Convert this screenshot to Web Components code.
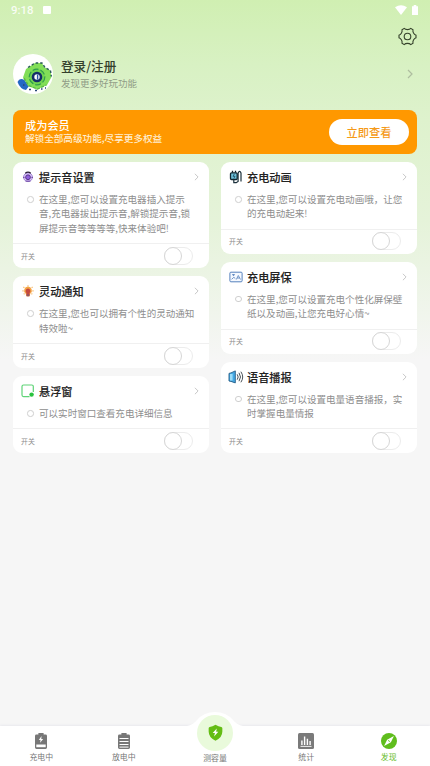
<!DOCTYPE html>
<html lang="zh-CN">
<head>
<meta charset="utf-8">
<title>发现</title>
<style>
html,body{margin:0;height:100%}
body{font-family:"Noto Sans CJK SC","Noto Sans",sans-serif;color:#333;overflow:hidden}
</style>
</head>
<body>
<discover-page></discover-page>
<script>
const ICONS = {
  sound: `<svg viewBox="0 0 14 14"><circle cx="7" cy="7.200" r="5.200" fill="#d9c4f8" stroke="#9a7bd0" stroke-width="1"/><path d="M3.800 2.600Q7 0 10.200 2.600" fill="none" stroke="#292034" stroke-width="1.500"/><circle cx="7" cy="7.300" r="2.800" fill="#9061dd" stroke="#4d287e" stroke-width="1"/><path d="M1.200 7.500h1.800M11 7.500h1.800M4.200 11.800h5.600" stroke="#5d3894"/></svg>`,
  bulb: `<svg viewBox="0 0 14 14"><path d="M7 1.800V.4M2.800 3.300l-1.200-1M11.200 3.300l1.200-1M2 6.800H.4M12 6.800h1.600M3 10l-1 .8M11 10l1 .8" stroke="#f6bd72" stroke-width="1.400"/><path d="M7 1.800a4.600 4.600 0 0 0-2.800 8.200L5.200 13h3.600l1-3A4.600 4.600 0 0 0 7 1.800z" fill="#f5a545"/><path d="M7 4a2.900 2.900 0 0 0-2 4.900L5.500 13h3L9 8.900A2.900 2.900 0 0 0 7 4z" fill="#c4483e"/><path d="M5.400 10.800h3.200V13H5.400z" fill="#8f5664"/></svg>`,
  float: `<svg viewBox="0 0 14 14"><path d="M8.500 12.600H2.500A1.500 1.500 0 0 1 1 11.100V2.500A1.500 1.500 0 0 1 2.500 1h8.300a1.500 1.500 0 0 1 1.500 1.500V8" fill="none" stroke="#5fd477" stroke-width="1.200"/><circle cx="10.600" cy="10.600" r="2.200" fill="#29c33e"/></svg>`,
  plug: `<svg viewBox="0 0 14 14"><path d="M3.500.7v2M6.500.7v2" stroke="#101c24" stroke-width="1.300"/><rect x="1.500" y="2.800" width="6.700" height="6.700" rx="1" fill="#6ec0da" stroke="#13252e" stroke-width="1.300"/><path d="M5.300 4L4 6.300h2L4.800 8.500" fill="none" stroke="#16465a" stroke-width=".8"/><path d="M4.800 9.700v3h2.400l1.900-1.300V3.200Q10.600-.3 12 3v8.600" fill="none" stroke="#1b303b" stroke-width="1.200"/></svg>`,
  screen: `<svg viewBox="0 0 14 14"><rect x=".9" y="2.200" width="12.200" height="9.600" rx="1" fill="#f5f9ff" stroke="#5580bd" stroke-width="1"/><path d="M2.600 9.300l2.200-2 1.500 1.200M7.300 9.500l2-4 2.200 4M8.200 8h2.300M3 4.700h3M4.500 4v2" fill="none" stroke="#628ac2" stroke-width=".9"/></svg>`,
  voice: `<svg viewBox="0 0 16 14"><path d="M1 3.400L3 2.900 7.300.9v12L3 11.400 1 11z" fill="#45a9e4" stroke="#235b86" stroke-width=".9"/><path d="M2 4h2.600v6.500H2z" fill="#9bdcf8"/><path d="M9.200 4.300q2 2.700 0 5.400M11 2.800q3 4.200 0 8.400M12.900 1.700q3.600 5.300 0 10.600" fill="none" stroke="#333d45" stroke-width=".9"/></svg>`,
  charge: `<svg viewBox="0 0 16 16"><path d="M5.400 0h5.200v1.500h2A1.400 1.400 0 0 1 14 2.900v11.700A1.400 1.400 0 0 1 12.600 16H3.400A1.400 1.400 0 0 1 2 14.600V2.900A1.400 1.400 0 0 1 3.400 1.500h2z" fill="#777"/><path d="M8.500 3.100L5.800 7h1.700l-.4 2.800L10.200 6H8.300z" fill="#fff"/><path d="M3.300 11.500h9.400v2.700H3.300z" fill="#fff"/></svg>`,
  discharge: `<svg viewBox="0 0 16 16"><path d="M5.400 0h5.200v1.500h2A1.400 1.400 0 0 1 14 2.900v11.700A1.400 1.400 0 0 1 12.600 16H3.400A1.400 1.400 0 0 1 2 14.600V2.900A1.400 1.400 0 0 1 3.400 1.500h2z" fill="#777"/><path d="M3.500 5.500h9M3.500 8.500h9M3.500 11.500h9M3.500 14.100h9" stroke="#fff" stroke-width="1"/></svg>`,
  stats: `<svg viewBox="0 0 16 16"><rect width="16" height="16" rx="1.500" fill="#7a7a7a"/><path d="M3.900 7.500V12M6.600 3.500V12M9.400 5.800V12M12.100 8V12" stroke="#fff" stroke-width="1.400"/><path d="M2.500 13.400h11" stroke="#fff" stroke-width=".9"/></svg>`,
  compass: `<svg viewBox="0 0 16 16"><circle cx="8" cy="8" r="8" fill="#5fbd1d"/><path d="M12.900 3.100L9.900 9.200 3.100 12.900 6.100 6.800z" fill="#fff"/><path d="M7 7.400L9 8.600" stroke="#5fbd1d" stroke-width=".9"/></svg>`,
  shield: `<svg viewBox="0 0 16 18"><path d="M8 .6Q11.300 2.600 14.200 3Q15.300 3.200 15.300 4.500V8Q15.300 14.500 8 17.700.7 14.500.7 8V4.500Q.7 3.200 1.800 3 4.700 2.600 8 .6z" fill="#64bd14"/><path d="M9.300 4.800L5 9.400h2.400l-.9 3.800 4.500-4.900H8.700z" fill="#fff"/></svg>`,
  chevron: `<svg viewBox="0 0 6 10"><path d="M1 1l4 4-4 4" fill="none" stroke="currentColor" stroke-width="1.200"/></svg>`
};
function define(name, css, html) {
  customElements.define(name, class extends HTMLElement {
    constructor() {
      super();
      this.attachShadow({mode: 'open'}).innerHTML = `<style>*{box-sizing:border-box}${css}</style>${html}`;
    }
  });
}
customElements.define('ui-icon', class extends HTMLElement {
  constructor() { super(); this.attachShadow({mode: 'open'}); }
  connectedCallback() {
    this.shadowRoot.innerHTML = `<style>:host{display:block;flex:none}svg{display:block;width:100%;height:100%}</style>${ICONS[this.getAttribute('name')]}`;
  }
});
define('toggle-switch', `
:host{display:block;width:29px;height:18px;flex:none}
div{width:29px;height:18px;border:1px solid #ececec;border-radius:9px;background:#fff}
i{display:block;width:18px;height:18px;margin:-1px;border:1px solid #d6d6d6;border-radius:50%;background:#fff}`,
`<div><i></i></div>`);

define('status-bar', `
:host{display:flex;align-items:center;height:18px;padding:1px 11px 0;color:rgba(255,255,255,.88);font:500 11.400px/18px Roboto,sans-serif}
.sq{width:8px;height:8px;border-radius:1px;background:#fff;margin-left:10px;margin-right:auto}
svg{display:block}.b{margin-left:5px;margin-right:1px}`,
`<span>9:18</span><span class="sq"></span>
<svg width="12" height="10" viewBox="0 0 12 10"><path d="M0 2.200Q6-1.800 12 2.200L6 10z" fill="#fff"/></svg>
<svg class="b" width="6" height="10" viewBox="0 0 6 10"><path d="M1.700 0h2.600v1.300H6V10H0V1.300h1.700z" fill="#fff"/></svg>`);

define('user-row', `
:host{display:flex;align-items:center;height:40px;padding:0 17px 0 13px}
.av{display:block;width:40px;height:40px;flex:none}
.t{margin-left:8px;flex:1}
.n{font-size:12.600px;line-height:18px;font-weight:500;color:#34402c}
.s{font-size:9.500px;line-height:15px;color:#909c86;margin-top:1px}
ui-icon{width:6px;height:10px;color:#aebda0}`,
`<svg class="av" viewBox="0 0 40 40"><circle cx="20" cy="20" r="20" fill="#fff"/>
<path d="M4.500 28q2-5 7-2l4.500 6-3 4q-6-1-8.500-8z" fill="#2468c4"/>
<path d="M13 15L22 9h7l2 4 6.500 3.500 1 6.500-4.500 8-10 4.500-9-3.500-5-8.500z" fill="#82de58"/>
<path d="M15 13.500L22 9h7l3 4.500 5.500 3 .8 6" fill="none" stroke="#2a5a58" stroke-width="1.400" stroke-dasharray="2.500 2"/>
<path d="M11 24l4.500 7.500 9 3.500 9-4" fill="none" stroke="#57b648" stroke-width="1.200" stroke-dasharray="3 1.500"/>
<circle cx="24" cy="23" r="7.800" fill="#6fd350" stroke="#2f9c4c" stroke-width="1.200" stroke-dasharray="6 2"/>
<circle cx="24" cy="23" r="4" fill="#fff" stroke="#152e67" stroke-width="2.600"/>
<path d="M24.600 20.500v5" fill="none" stroke="#2956a7" stroke-width="1.400"/>
<path d="M10 31h1.500M16 35.500h2M22 36.500h2M28 35h1.500M32 34h1" stroke="#294878" stroke-width="1.300"/></svg>
<div class="t"><div class="n">登录/注册</div><div class="s">发现更多好玩功能</div></div><ui-icon name="chevron"></ui-icon>`);

define('member-banner', `
:host{display:flex;align-items:center;justify-content:space-between;height:44px;margin:16px 13px 8px;padding:0 8px 0 12px;border-radius:8px;background:#ff9800;color:#fff4e0}
.t{display:flex;flex-direction:column;padding-bottom:2px}
.a{font-size:11.200px;line-height:14px;font-weight:500;color:#fff}
.b{font-size:9.600px;line-height:13px;font-weight:500;color:#ffedcf}
button{width:80px;height:26px;border:0;border-radius:13px;padding:0;background:#fff;color:#f59a18;font:500 11.200px/25px "Noto Sans CJK SC",sans-serif}`,
`<div class="t"><div class="a">成为会员</div><div class="b">解锁全部高级功能,尽享更多权益</div></div><button>立即查看</button>`);

customElements.define('feature-card', class extends HTMLElement {
  constructor() { super(); this.attachShadow({mode: 'open'}); }
  connectedCallback() {
    const icon = this.getAttribute('icon');
    this.shadowRoot.innerHTML = `<style>
*{box-sizing:border-box}
:host{display:block;background:#fff;border-radius:9px}
.h{display:flex;align-items:center;height:30px;padding:0 10px 0 8px}
.ic{width:14px;height:14px;margin-right:4px}
.ic[name=voice]{width:16px;margin:0 3px 0 -1px}
.ic[name=sound],.ic[name=bulb]{width:12px;height:12px;margin:0 5px 0 1px}
h3{margin:0;flex:1;font-size:11.150px;line-height:16px;font-weight:500;color:#222;-webkit-text-stroke:.15px #222}
.go{width:5px;height:8px;color:#c6c6c6}
.d{display:flex;padding:0 0 8px 14px}
.dot{width:6.500px;height:6.500px;border:1px solid #cfcfcf;border-radius:50%;margin:4px 5.500px 0 0;flex:none}
p{margin:0;font-size:9.550px;line-height:14.400px;color:#8e8e8e;white-space:nowrap}
.f{display:flex;align-items:center;justify-content:space-between;height:25px;border-top:1px solid #f0f0f0;padding:0 16px 1px 8px;font-size:6.900px;color:#8e8e8e}
</style>
<div class="h"><ui-icon class="ic" name="${icon}"></ui-icon><h3>${this.getAttribute('heading')}</h3><ui-icon class="go" name="chevron"></ui-icon></div>
<div class="d"><span class="dot"></span><p><slot></slot></p></div>
<div class="f"><span>开关</span><toggle-switch></toggle-switch></div>`;
  }
});

customElements.define('tab-item', class extends HTMLElement {
  constructor() { super(); this.attachShadow({mode: 'open'}); }
  connectedCallback() {
    this.shadowRoot.innerHTML = `<style>
:host{display:flex;flex-direction:column;align-items:center;width:82.500px;padding-top:7px;font-size:7.900px;line-height:12px;color:#777}
:host([active]){color:#65bb26}
ui-icon{width:16px;height:16px;margin-bottom:1.500px}
</style><ui-icon name="${this.getAttribute('icon')}"></ui-icon><span><slot></slot></span>`;
  }
});
define('center-tab', `
:host{display:flex;flex-direction:column;align-items:center;flex:1;font-size:7.900px;line-height:12px;color:#777;margin-top:-14px}
.o{width:56px;height:42px;display:grid;place-items:center}
.o>*{grid-area:1/1}
.bump{width:56px;height:42px;display:block}
.c{width:36px;height:36px;border-radius:50%;background:#e9fadb;display:grid;place-items:center}
ui-icon{width:15px;height:17px;margin-top:-1px}span{margin-top:-2px}`,
`<div class="o"><svg class="bump" viewBox="0 0 56 42"><path d="M0 14Q6 13 10 8Q17 0 28 0T46 8Q50 13 56 14V42H0z" fill="#fff"/></svg><div class="c"><ui-icon name="shield"></ui-icon></div></div><span><slot></slot></span>`);
define('tab-bar', `:host{display:flex;height:40px;background:#fff;box-shadow:0 -1px 2px #e9e9ee;margin-top:auto}`,
`<tab-item icon="charge">充电中</tab-item><tab-item icon="discharge">放电中</tab-item><center-tab>测容量</center-tab><tab-item icon="stats">统计</tab-item><tab-item icon="compass" active>发现</tab-item>`);

define('discover-page', `
:host{display:flex;flex-direction:column;height:766px;width:430px;background:linear-gradient(#d0efb2 0,#d8f1c3 65px,#def2cd 120px,#e5f3d9 220px,#f6f6f6 360px)}
.set{display:flex;justify-content:flex-end;height:36px;padding:9px 13px 0 0}
.cols{display:flex;gap:12px;padding:0 13px}
.col{display:flex;flex-direction:column;gap:8px;flex:1}`,
`<status-bar></status-bar>
<div class="set"><svg width="19" height="19" viewBox="0 0 19 19" fill="none" stroke="#35422b" stroke-width="1.100"><path d="M6.200 1.400Q7.300 2.600 9.500 2.600T12.800 1.400L15 2.700Q14.600 4.400 15.500 6T18 8.200V10.800Q16.400 11.400 15.500 13T15 16.300L12.800 17.600Q11.700 16.400 9.500 16.400T6.200 17.600L4 16.300Q4.400 14.600 3.500 13T1 10.800V8.200Q2.600 7.600 3.500 6T4 2.700z"/><circle cx="9.500" cy="9.500" r="3.300"/></svg></div>
<user-row></user-row>
<member-banner></member-banner>
<div class="cols">
<div class="col">
<feature-card icon="sound" heading="提示音设置">在这里,您可以设置充电器插入提示<br>音,充电器拔出提示音,解锁提示音,锁<br>屏提示音等等等等,快来体验吧!</feature-card>
<feature-card icon="bulb" heading="灵动通知">在这里,您也可以拥有个性的灵动通知<br>特效啦~</feature-card>
<feature-card icon="float" heading="悬浮窗">可以实时窗口查看充电详细信息</feature-card>
</div>
<div class="col">
<feature-card icon="plug" heading="充电动画">在这里,您可以设置充电动画哦，让您<br>的充电动起来!</feature-card>
<feature-card icon="screen" heading="充电屏保">在这里,您可以设置充电个性化屏保壁<br>纸以及动画,让您充电好心情~</feature-card>
<feature-card icon="voice" heading="语音播报">在这里,您可以设置电量语音播报，实<br>时掌握电量情报</feature-card>
</div>
</div>
<tab-bar></tab-bar>`);
</script>
</body>
</html>
